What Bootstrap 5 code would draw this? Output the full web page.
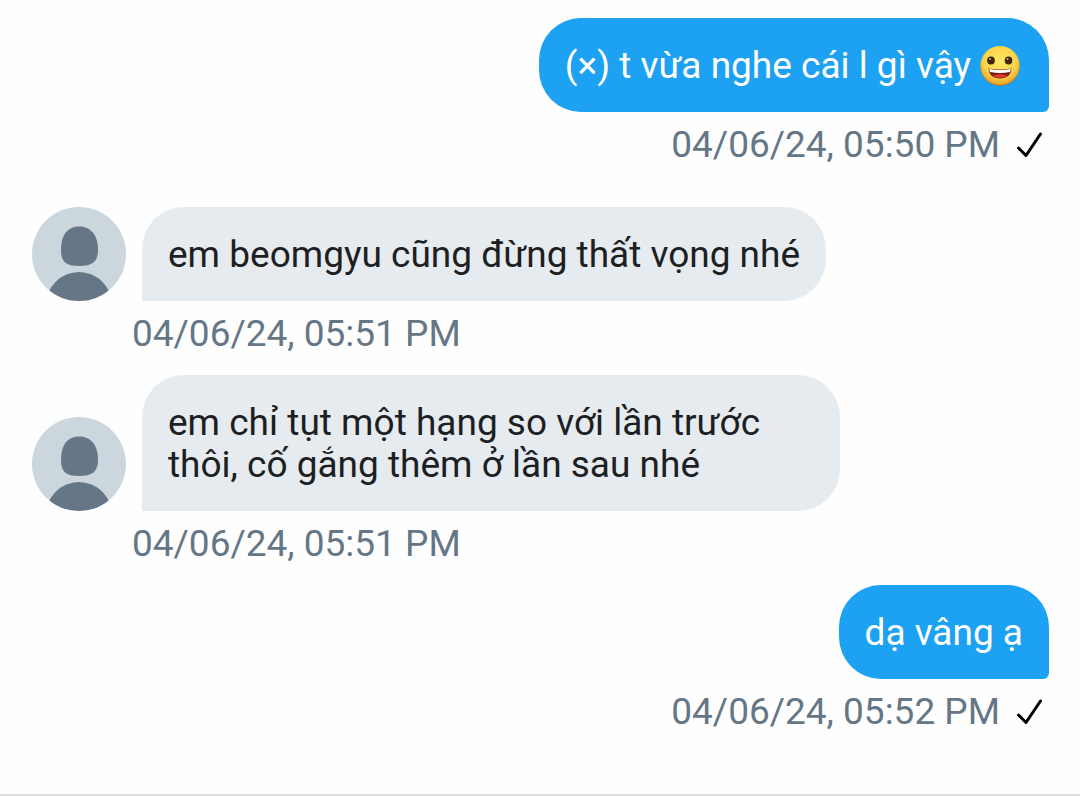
<!DOCTYPE html>
<html lang="vi">
<head>
<meta charset="utf-8">
<meta name="viewport" content="width=device-width, initial-scale=1">
<title>Messages</title>
<link href="https://cdn.jsdelivr.net/npm/bootstrap@5.3.0/dist/css/bootstrap.min.css" rel="stylesheet">
<style>
  body { font-family: Roboto, "Noto Sans", sans-serif; background: #fefefe; }
  .chat { padding: 18px 31px 61px 32px; border-bottom: 2px solid #dedede; }
  .bubble { padding: 27px 26px 25px; font-size: 37px; line-height: 42px; max-width: 698px; border-radius: 42px; }
  .bubble-in { background: #e6ebef; color: #1c2022; border-bottom-left-radius: 0; }
  .bubble-out { background: #1da1f2; color: #fff; border-bottom-right-radius: 6px; }
  .stamp { font-size: 37px; line-height: 42px; color: #657786; padding-top: 12px; }
  .stamp-in { padding-left: 100px; }
  .stamp-out { padding-right: 6px; }
  .message { margin-bottom: 20px; }
  .message-first { margin-bottom: 41px; }
  .avatar { width: 94px; height: 94px; background: #ccd6dd; }
  .emoji { width: 44px; height: 42px; }
  .tick { width: 27px; height: 26px; }
</style>
</head>
<body>
<svg class="position-absolute" width="0" height="0" aria-hidden="true">
  <symbol id="person" viewBox="0 0 94 94">
    <path d="M47 19.500C36 19.500 29 27 29 43C29 55 34 59 47 59C60 59 66 55 66 43C66 27 58 19.500 47 19.500Z" fill="#657786"/>
    <circle cx="47" cy="98" r="33" fill="#657786"/>
  </symbol>
  <symbol id="check" viewBox="0 0 26 26">
    <path d="M2 16L9.500 23.500L24 2" fill="none" stroke="#000" stroke-width="3" stroke-linecap="round" stroke-linejoin="round"/>
  </symbol>
</svg>
<main class="chat d-flex flex-column">
  <article class="message message-first d-flex flex-column align-items-end">
    <div class="bubble bubble-out d-flex align-items-center gap-2">
      <span>(×) t vừa nghe cái l gì vậy</span>
      <svg class="emoji flex-shrink-0" viewBox="0 0 44 42" role="img" aria-label="😀">
        <defs>
          <radialGradient id="face" cx="50%" cy="40%" r="62%">
            <stop offset="0" stop-color="#ffe765"/><stop offset=".65" stop-color="#fdd54a"/><stop offset="1" stop-color="#e99b1f"/>
          </radialGradient>
        </defs>
        <circle cx="21" cy="21.500" r="19.500" fill="#a87a35"/>
        <circle cx="21" cy="20.500" r="19.500" fill="url(#face)"/>
        <ellipse cx="12" cy="15.500" rx="3.800" ry="4" fill="#3b2410"/>
        <ellipse cx="29.500" cy="15.500" rx="3.800" ry="4" fill="#3b2410"/>
        <circle cx="11" cy="14" r="1" fill="#d9b36a"/>
        <circle cx="28.500" cy="14" r="1" fill="#d9b36a"/>
        <path d="M9.500 23.500Q21 25.500 32.500 23.500C32 30 28 33.500 21 33.500S10 30 9.500 23.500Z" fill="#6d1d12"/>
        <path d="M10 24Q21 26 32 24L31 27Q21 29 11 27Z" fill="#fff"/>
        <path d="M13 30.500Q21 27.500 29 30.500Q26 33 21 33T13 30.500Z" fill="#d83a2c"/>
      </svg>
    </div>
    <div class="stamp stamp-out d-flex align-items-center gap-3"><time>04/06/24, 05:50 PM</time><svg class="tick" role="img" aria-label="Sent"><use href="#check"/></svg></div>
  </article>
  <article class="message">
    <div class="d-flex align-items-end gap-3">
      <svg class="avatar rounded-circle flex-shrink-0" aria-hidden="true"><use href="#person"/></svg>
      <div class="bubble bubble-in">em beomgyu cũng đừng thất vọng nhé</div>
    </div>
    <div class="stamp stamp-in"><time>04/06/24, 05:51 PM</time></div>
  </article>
  <article class="message">
    <div class="d-flex align-items-end gap-3">
      <svg class="avatar rounded-circle flex-shrink-0" aria-hidden="true"><use href="#person"/></svg>
      <div class="bubble bubble-in">em chỉ tụt một hạng so với lần trước thôi, cố gắng thêm ở lần sau nhé</div>
    </div>
    <div class="stamp stamp-in"><time>04/06/24, 05:51 PM</time></div>
  </article>
  <article class="d-flex flex-column align-items-end">
    <div class="bubble bubble-out">dạ vâng ạ</div>
    <div class="stamp stamp-out d-flex align-items-center gap-3"><time>04/06/24, 05:52 PM</time><svg class="tick" role="img" aria-label="Sent"><use href="#check"/></svg></div>
  </article>
</main>
<script src="https://cdn.jsdelivr.net/npm/bootstrap@5.3.0/dist/js/bootstrap.bundle.min.js"></script>
</body>
</html>
